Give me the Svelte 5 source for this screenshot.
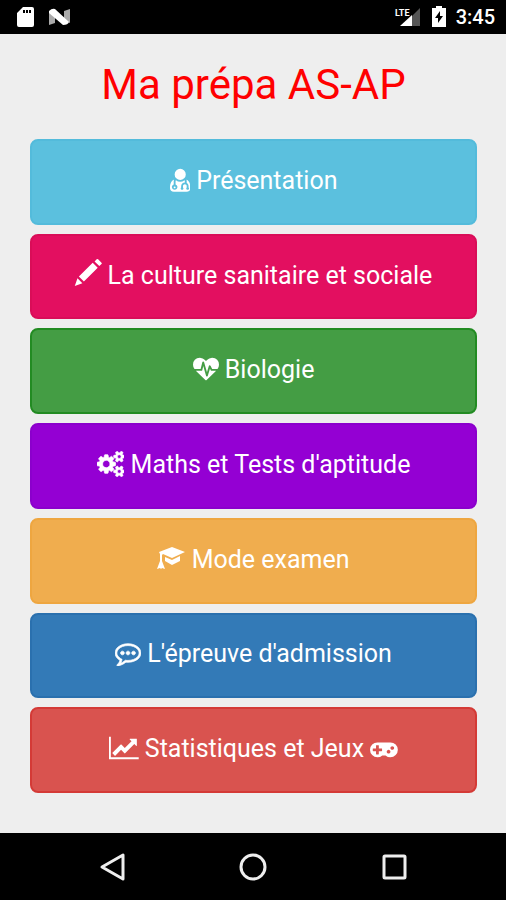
<script lang="ts">
    type Icon = { width: number; height?: number; path: string; style?: string };

    const SMALL_COG =
        "v140q0 16-149 31-12 27-30 52 51 113 51 138 0 4-4 7-122 71-124 71-8 0-46-47t-52-68q-20 2-30 2t-30-2q-14 21-52 68t-46 47q-2 0-124-71-4-3-4-7 0-25 51-138-18-25-30-52-149-15-149-31v-140q0-16 149-31 13-29 30-52-51-113-51-138 0-4 4-7 4-2 35-20t59-34 30-16q8 0 46 46.5t52 67.5q20-2 30-2t30 2q51-71 92-112l6-2q4 0 124 70 4 3 4 7 0 25-51 138 17 23 30 52 149 15 149 31z";
    const DOT =
        "q0-53-37.5-90.5t-90.5-37.5-90.5 37.5-37.5 90.5 37.5 90.5 90.5 37.5 90.5-37.5 37.5-90.5z";

    const doctor: Icon = {
        width: 1408,
        path: "M384 1408q0 26-19 45t-45 19-45-19-19-45 19-45 45-19 45 19 19 45zm1024 37q0 121-73 190t-194 69h-874q-121 0-194-69t-73-190q0-68 5.5-131t24-138 47.5-132.5 81-103 120-60.5q-22 52-22 120v203q-58 20-93 70t-35 111q0 80 56 136t136 56 136-56 56-136q0-61-35.5-111t-92.5-70v-203q0-62 25-93 132 104 295 104t295-104q25 31 25 93v64q-106 0-181 75t-75 181v89q-32 29-32 71 0 40 28 68t68 28 68-28 28-68q0-42-32-71v-89q0-52 38-90t90-38 90 38 38 90v89q-32 29-32 71 0 40 28 68t68 28 68-28 28-68q0-42-32-71v-89q0-68-34.5-127.5t-93.5-93.5q0-10 .5-42.5t0-48-2.5-41.5-7-47-13-40q68 15 120 60.5t81 103 47.5 132.5 24 138 5.5 131zm-320-933q0 159-112.5 271.5t-271.5 112.5-271.5-112.5-112.5-271.5 112.5-271.5 271.5-112.5 271.5 112.5 112.5 271.5z",
    };
    const pencil: Icon = {
        width: 1890,
        height: 1907,
        style: "raised",
        path: "M1582 0q29 0 51 20l238 238q20 22 20 51t-20 51l-154 143-333-333 148-150q20-20 50-20zM1605 618l-977 975-353-353 977-975zM522 1713l-538 194 191-541z",
    };
    const heartbeat: Icon = {
        width: 1792,
        path: "M1280 1024h305q-5 6-10 10.5t-9 7.5l-3 4-623 600q-18 18-44 18t-44-18l-624-602q-5-2-21-20h369q22 0 39.5-13.5t22.5-34.5l70-281 190 667q6 20 23 33t39 13q21 0 38-13t23-33l146-485 56 112q18 35 57 35zm512-428q0 145-103 300h-369l-111-221q-8-17-25.5-27t-36.5-8q-45 5-56 46l-129 430-196-686q-6-20-23.5-33t-39.5-13-39 13.5-22 34.5l-116 464h-423q-103-155-103-300 0-220 127-344t351-124q62 0 126.5 21.5t120 58 95.5 68.5 76 68q36-36 76-68t95.5-68.5 120-58 126.5-21.5q224 0 351 124t127 344z",
    };
    const cogs: Icon = {
        width: 1920,
        style: "heavy",
        path:
            "M896 896q0-106-75-181t-181-75-181 75-75 181 75 181 181 75 181-75 75-181zm768 512q0-52-38-90t-90-38-90 38-38 90q0 53 37.5 90.5t90.5 37.5 90.5-37.5 37.5-90.5zm0-1024q0-52-38-90t-90-38-90 38-38 90q0 53 37.5 90.5t90.5 37.5 90.5-37.5 37.5-90.5zm-384 421v185q0 10-7 19.5t-16 10.5l-155 24q-11 35-32 76 34 48 90 115 7 11 7 20 0 12-7 19-23 30-82.5 89.5t-78.5 59.5q-11 0-21-7l-115-90q-37 19-77 31-11 108-23 155-7 24-30 24h-186q-11 0-20-7.5t-10-17.5l-23-153q-34-10-75-31l-118 89q-7 7-20 7-11 0-21-8-144-133-144-160 0-9 7-19 10-14 41-53t47-61q-23-44-35-82l-152-24q-10-1-17-9.5t-7-19.5v-185q0-10 7-19.5t16-10.5l155-24q11-35 32-76-34-48-90-115-7-11-7-20 0-12 7-20 22-30 82-89t79-59q11 0 21 7l115 90q34-18 77-32 11-108 23-154 7-24 30-24h186q11 0 20 7.5t10 17.5l23 153q34 10 75 31l118-89q8-7 20-7 11 0 21 8 144 133 144 160 0 8-7 19-12 16-42 54t-45 60q23 48 34 82l152 23q10 2 17 10.5t7 19.5z" +
            "M1920 1338" + SMALL_COG +
            "M1920 314" + SMALL_COG,
    };
    const graduation: Icon = {
        width: 28,
        height: 26,
        path: "M15 1l13 5-13 6-9-4-1 1v6l3 8-3-1-1 1-1-1-3 1 3-8V8L2 6zM8 11l7 3 8-4v5l-8 4-7-4z",
    };
    const comment: Icon = {
        width: 1792,
        style: "heavy",
        path:
            "M640 896" + DOT + "M1024 896" + DOT + "M1408 896" + DOT +
            "M896 384q-204 0-381.5 69.5t-282 187.5-104.5 255q0 112 71.5 213.5t201.5 175.5l87 50-27 96q-24 91-70 172 152-63 275-171l43-38 57 6q69 8 130 8 204 0 381.5-69.5t282-187.5 104.5-255-104.5-255-282-187.5-381.5-69.5zm896 512q0 174-120 321.5t-326 233-450 85.5q-70 0-145-8-198 175-460 242-49 14-114 22h-5q-15 0-27-10.5t-16-27.5v-1q-3-4-.5-12t2-10 4.5-9.5l6-9 7-8.5 8-9q7-8 31-34.5t34.5-38 31-39.5 32.5-51 27-59 26-76q-157-89-247.5-220t-90.5-281q0-174 120-321.5t326-233 450-85.5 450 85.5 326 233 120 321.5z",
    };
    const chart: Icon = {
        width: 2048,
        path: "M2048 1536v128h-2048v-1536h128v1408h1920zm-128-1248v435q0 21-19.5 29.5t-35.5-7.5l-121-121-633 633q-10 10-23 10t-23-10l-233-233-416 416-192-192 585-585q10-10 23-10t23 10l233 233 464-464-121-121q-16-16-7.5-35.5t29.5-19.5h435q14 0 23 9t9 23z",
    };
    const gamepad: Icon = {
        width: 1920,
        path:
            "M832 1088v-128q0-14-9-23t-23-9h-192v-192q0-14-9-23t-23-9h-128q-14 0-23 9t-9 23v192h-192q-14 0-23 9t-9 23v128q0 14 9 23t23 9h192v192q0 14 9 23t23 9h128q14 0 23-9t9-23v-192h192q14 0 23-9t9-23z" +
            "M1408 1152" + DOT + "M1664 896" + DOT +
            "M1920 1024q0 212-150 362t-362 150q-192 0-338-128h-220q-146 128-338 128-212 0-362-150t-150-362 150-362 362-150h896q212 0 362 150t150 362z",
    };

    const items: { label: string; theme: string; icon: Icon; after?: Icon }[] = [
        { label: "Présentation", theme: "info", icon: doctor },
        { label: "La culture sanitaire et sociale", theme: "pink", icon: pencil },
        { label: "Biologie", theme: "green", icon: heartbeat },
        { label: "Maths et Tests d'aptitude", theme: "violet", icon: cogs },
        { label: "Mode examen", theme: "warning", icon: graduation },
        { label: "L'épreuve d'admission", theme: "primary", icon: comment },
        { label: "Statistiques et Jeux", theme: "danger", icon: chart, after: gamepad },
    ];
</script>

{#snippet glyph(icon: Icon)}
    <svg
        class="glyph {icon.style ?? ''}"
        viewBox="0 0 {icon.width} {icon.height ?? 1792}"
        aria-hidden="true"
    >
        <path fill-rule="evenodd" d={icon.path} />
    </svg>
{/snippet}

<div class="screen">
    <header class="status-bar">
        <div class="status-group notices">
            <svg width="18" height="22" viewBox="0 0 18 22" aria-hidden="true">
                <path
                    fill="#fff"
                    fill-rule="evenodd"
                    d="M6 1h9q2 0 2 2v16q0 2-2 2H2q-2 0-2-2V7zM6 4v3h2V4zM9 4v3h2V4zM12 4v3h2V4z"
                />
            </svg>
            <svg width="22" height="18" viewBox="0 0 22 18" aria-hidden="true">
                <path fill="#aaa" d="M0 3l6 4v8l-6 2zM15 3l6-2v14l-6-3z" />
                <path fill="#fff" d="M0 3q3-3 6-2l14 13q-1 3-6 3L0 5z" />
            </svg>
        </div>
        <div class="status-group">
            <svg width="28" height="22" viewBox="0 0 28 22" aria-hidden="true">
                <path fill="#555" d="M27 2v18H18V11z" />
                <path fill="#fff" d="M19 9v11H7z" />
                <text class="lte" x="2" y="10">LTE</text>
            </svg>
            <svg class="battery" width="14" height="22" viewBox="0 0 14 22" aria-hidden="true">
                <path fill="#fff" d="M4 0h6v2h4v19H0V2h4z" />
                <path fill="#000" d="M8 5l-5 7h3v5l5-7H8z" />
            </svg>
            <time class="clock">3:45</time>
        </div>
    </header>

    <main>
        <h1>Ma prépa AS-AP</h1>
        <div class="menu">
            {#each items as item}
                <button type="button" class="entry {item.theme}">
                    <span>
                        {@render glyph(item.icon)}
                        {item.label}
                        {#if item.after}{@render glyph(item.after)}{/if}
                    </span>
                </button>
            {/each}
        </div>
    </main>

    <nav class="nav-bar">
        <button type="button" aria-label="Retour">
            <svg width="30" height="30" viewBox="0 0 30 30">
                <path d="M26 3v24L5 15z" />
            </svg>
        </button>
        <button type="button" aria-label="Accueil">
            <svg width="30" height="30" viewBox="0 0 30 30">
                <circle cx="15" cy="15" r="12" />
            </svg>
        </button>
        <button type="button" aria-label="Applications récentes">
            <svg width="30" height="30" viewBox="0 0 30 30">
                <rect x="5" y="4" width="21" height="22" rx="1" />
            </svg>
        </button>
    </nav>
</div>

<style>
    :global(body) {
        margin: 0;
        background: #eee;
    }

    .screen {
        display: flex;
        flex-direction: column;
        min-height: 100vh;
        font-family: Roboto, "Liberation Sans", sans-serif;
    }

    .status-bar {
        display: flex;
        align-items: center;
        justify-content: space-between;
        height: 34px;
        padding: 0 11px 0 17px;
        background: #000;
        color: #fff;
    }

    .status-group {
        display: flex;
        align-items: center;
    }

    .notices {
        gap: 14px;
    }

    .lte {
        fill: #fff;
        font-size: 9px;
        font-weight: 700;
    }

    .battery {
        margin: 0 10px 0 11px;
    }

    .clock {
        font-size: 20px;
        font-weight: 500;
    }

    main {
        display: flex;
        flex: 1;
        flex-direction: column;
        padding: 21px 29px 40px 30px;
    }

    h1 {
        margin: 0 0 24px;
        color: #f00;
        font-size: 42px;
        font-weight: 400;
        line-height: 60px;
        text-align: center;
    }

    .menu {
        display: grid;
        flex: 1;
        grid-auto-rows: 1fr;
        gap: 9px;
    }

    .entry {
        padding: 0 12px 2px;
        border: 2px solid;
        border-radius: 8px;
        color: #fff;
        font-family: inherit;
        font-size: 25px;
        line-height: 36px;
        cursor: pointer;
    }

    .glyph {
        height: 26px;
        fill: currentColor;
        vertical-align: -4px;
    }

    .raised {
        height: 27px;
        overflow: visible;
        vertical-align: -2px;
    }

    .heavy {
        stroke: currentColor;
        stroke-width: 50;
    }

    .info {
        background: #5bc0de;
        border-color: #53bbdb;
    }

    .pink {
        background: #e30f60;
        border-color: #d90d58;
    }

    .green {
        background: #449d44;
        border-color: #228b22;
    }

    .violet {
        background: #9400d3;
        border-color: #8b00cc;
    }

    .warning {
        background: #f0ad4e;
        border-color: #eea640;
    }

    .primary {
        background: #337ab7;
        border-color: #2a70ae;
    }

    .danger {
        background: #d9534f;
        border-color: #d43a36;
    }

    .nav-bar {
        display: grid;
        grid-template-columns: repeat(3, 1fr);
        height: 67px;
        padding: 0 42px;
        background: #000;
    }

    .nav-bar button {
        display: flex;
        align-items: center;
        justify-content: center;
        padding: 0;
        border: 0;
        background: none;
        cursor: pointer;
    }

    .nav-bar svg {
        fill: none;
        stroke: #eee;
        stroke-width: 3;
        stroke-linejoin: round;
    }
</style>
